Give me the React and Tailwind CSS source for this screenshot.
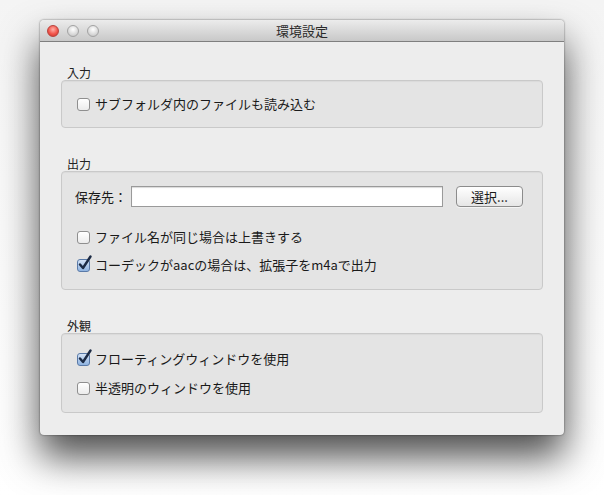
import React from "react";

const font = { fontFamily: '"Noto Sans CJK JP", "Noto Sans", sans-serif' };

function Checkbox({ checked }) {
  if (!checked) {
    return (
      <span className="w-[13px] h-[13px] rounded-[3px] border border-[#8f8f8f] bg-gradient-to-b from-white to-[#ececec] shadow-[inset_0_1px_0_#fff] shrink-0" />
    );
  }
  return (
    <span className="relative w-[13px] h-[13px] shrink-0">
      <span className="absolute inset-0 rounded-[3px] border border-[#5a7aa8] bg-gradient-to-b from-[#d4e3f6] to-[#8fb3e0]" />
      <svg
        className="absolute left-[1px] top-[-4px]"
        width="14"
        height="16"
        viewBox="0 0 14 16"
      >
        <path
          d="M2 9.5 L5 13 L12.5 1.5"
          fill="none"
          stroke="#1c2b45"
          strokeWidth="2.4"
          strokeLinecap="round"
          strokeLinejoin="round"
        />
      </svg>
    </span>
  );
}

function Row({ checked, children }) {
  return (
    <div className="flex items-center h-[16px] gap-[5px] pl-[15px]">
      <Checkbox checked={checked} />
      <span className="text-[13px] leading-[16px] text-[#1a1a1a]">{children}</span>
    </div>
  );
}

function Group({ label, children, className }) {
  return (
    <div>
      <div className="h-[12px] leading-[12px] text-[12px] text-[#222] pl-[6px]">{label}</div>
      <div
        className={
          "mt-[1px] rounded-[4px] border border-[#c9c9c9] bg-[#e4e4e4] shadow-[inset_0_1px_1px_rgba(0,0,0,0.04)] " +
          className
        }
      >
        {children}
      </div>
    </div>
  );
}

function TrafficLight({ red }) {
  return (
    <span
      className={
        "w-[12px] h-[12px] rounded-full border " +
        (red
          ? "border-[#b8423c] bg-[radial-gradient(circle_at_50%_35%,#ffb0a8,#f2554b_55%,#c7332b)]"
          : "border-[#a3a3a3] bg-[radial-gradient(circle_at_50%_35%,#ffffff,#dcdcdc_55%,#bdbdbd)]")
      }
    />
  );
}

export default function App() {
  return (
    <div
      className="w-[604px] h-[495px] bg-gradient-to-b from-[#f4f4f4] to-[#ffffff] pt-[20px] pl-[40px] overflow-hidden"
      style={font}
    >
      <div className="w-[524px] h-[415px] rounded-[4px] bg-[#ededed] shadow-[0_22px_38px_rgba(0,0,0,0.7),0_0_2px_rgba(0,0,0,0.6)] overflow-hidden flex flex-col">
        <div className="relative h-[22px] shrink-0 bg-gradient-to-b from-[#ececec] to-[#c8c8c8] border-b border-[#7f7f7f] flex items-center">
          <div className="flex items-center gap-[8px] pl-[7px]">
            <TrafficLight red />
            <TrafficLight />
            <TrafficLight />
          </div>
          <div className="absolute inset-0 flex items-center justify-center text-[13px] text-[#2a2a2a]">
            環境設定
          </div>
        </div>

        <div className="px-[21px] pt-[25px] flex flex-col gap-[30px]">
          <Group label="入力" className="h-[48px] flex flex-col justify-center">
            <Row>サブフォルダ内のファイルも読み込む</Row>
          </Group>

          <Group label="出力" className="h-[119px] pt-[14px]">
            <div className="flex items-center pl-[13px] h-[21px]">
              <span className="text-[13px] text-[#1a1a1a] w-[56px]">保存先：</span>
              <div className="w-[312px] h-[21px] bg-white border border-[#9a9a9a] shadow-[inset_0_1px_1px_rgba(0,0,0,0.15)]" />
              <button className="ml-[13px] w-[67px] h-[21px] rounded-[4px] border border-[#8c8c8c] bg-gradient-to-b from-white to-[#e6e6e6] text-[13px] leading-[19px] text-[#1a1a1a] shadow-[0_1px_0_rgba(255,255,255,0.6)]">
                選択...
              </button>
            </div>
            <div className="mt-[22px] flex flex-col gap-[12px]">
              <Row>ファイル名が同じ場合は上書きする</Row>
              <Row checked>コーデックがaacの場合は、拡張子をm4aで出力</Row>
            </div>
          </Group>

          <Group label="外観" className="h-[80px] pt-[17px] flex flex-col gap-[13px]">
            <Row checked>フローティングウィンドウを使用</Row>
            <Row>半透明のウィンドウを使用</Row>
          </Group>
        </div>
      </div>
    </div>
  );
}
